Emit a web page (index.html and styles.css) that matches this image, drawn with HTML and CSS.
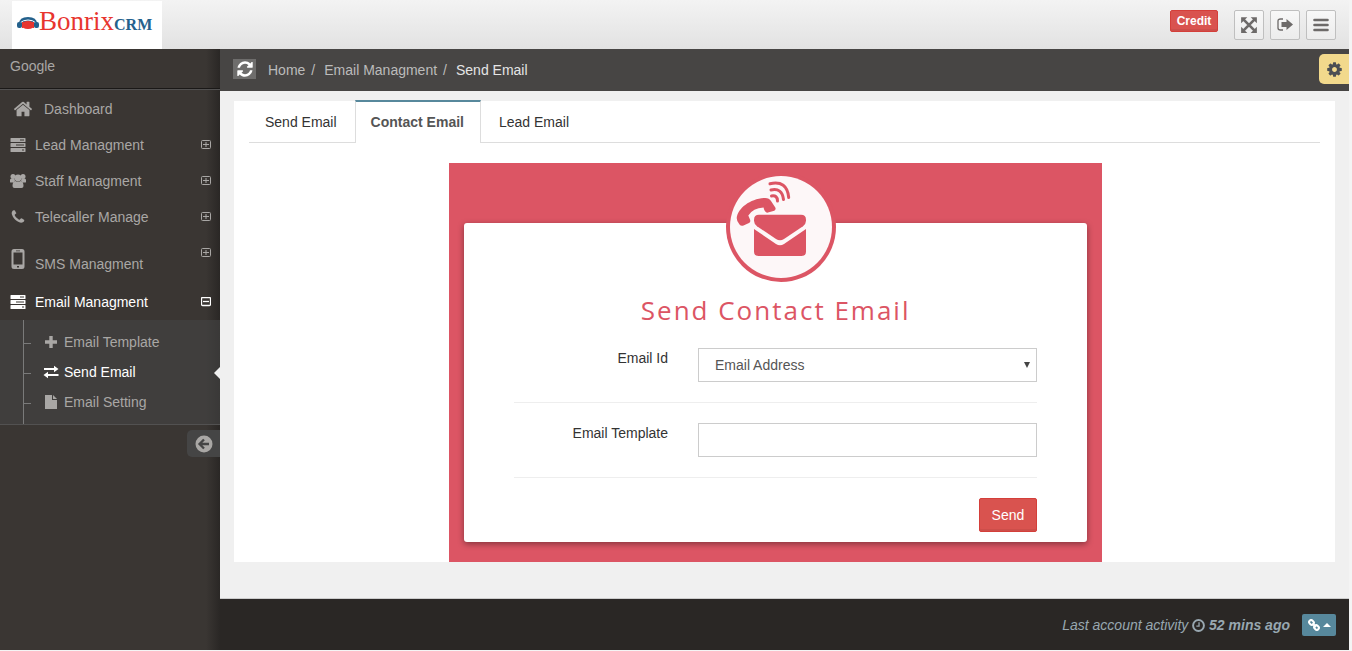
FILE: index.html
```html
<!DOCTYPE html>
<html lang="en">
<head>
    <meta charset="UTF-8">
    <meta name="viewport" content="width=device-width, initial-scale=1.0">
    <title>Bonrix CRM - Send Email</title>
    <link rel="stylesheet" href="styles.css">
</head>
<body>
    <header id="header">
        <a href="#" class="logo">
            <svg width="22" height="14" viewBox="0 0 22 14">
                <path d="M2 8Q2 1 11 1t9 7" fill="#24618c"/>
                <path d="M3 7Q6 4 11 4t8 3" fill="none" stroke="#fff"/>
                <ellipse cx="11" cy="9" rx="7" ry="4" fill="#e8352e"/>
                <rect x="0" y="6" width="5" height="6" rx="2" fill="#24618c"/>
                <rect x="17" y="6" width="5" height="6" rx="2" fill="#24618c"/>
                <path d="M5.500 6v6M16.500 6v6" stroke="#e8352e"/>
            </svg>
            <span class="logo-name">Bonrix</span><span class="logo-crm">CRM</span>
        </a>
        <div class="header-buttons">
            <button type="button" class="btn-danger credit">Credit</button>
            <button type="button" class="header-icon" aria-label="Full screen">
                <svg width="18" height="18" viewBox="0 0 16 16"><path d="M1 1h5.500L1 6.500zM15 1v5.500L9.500 1zM1 15V9.500L6.500 15zM15 15H9.500L15 9.500z" fill="#6d6a69"/><path d="M3 3l10 10M13 3L3 13" stroke="#6d6a69" stroke-width="2.400"/></svg>
            </button>
            <button type="button" class="header-icon" aria-label="Sign out">
                <svg width="16" height="16" viewBox="0 0 16 16"><path d="M6 2H3.500q-2.500 0-2.500 2v7q0 2 2.500 2H6" fill="none" stroke="#6d6a69" stroke-width="1.300"/><path d="M4.500 5h5V2l6.500 5.500L9.500 13v-3h-5z" fill="#6d6a69"/></svg>
            </button>
            <button type="button" class="header-icon" aria-label="Menu">
                <svg width="16" height="16" viewBox="0 0 16 16"><path d="M1.500 3h13M1.500 8h13M1.500 13h13" stroke="#6d6a69" stroke-width="2.600" stroke-linecap="round"/></svg>
            </button>
        </div>
    </header>

    <div class="page">
        <aside id="left-panel">
            <div class="login-info">Google</div>
            <nav>
                <a href="#" class="nav-item dashboard">
                    <svg class="icon" width="20" height="20" viewBox="0 0 1792 1792"><path d="M1472 992v480q0 26-19 45t-45 19h-384v-384h-256v384h-384q-26 0-45-19t-19-45v-480q0-1 .5-3t.5-3l575-474 575 474q1 2 1 6zm223-69l-62 74q-8 9-21 11h-3q-13 0-21-7l-692-577-692 577q-12 8-24 7-13-2-21-11l-62-74q-8-10-7-23.500t11-21.500l719-599q32-26 76-26t76 26l244 204v-195q0-14 9-23t23-9h192q14 0 23 9t9 23v408l219 182q10 8 11 21.500t-7 23.500z"/></svg>
                    <span>Dashboard</span>
                </a>
                <a href="#" class="nav-item">
                    <svg class="icon" width="16" height="16" viewBox="0 0 16 16"><use href="#server"/></svg>
                    <span>Lead Managment</span>
                    <svg class="toggle" width="10" height="10" viewBox="0 0 10 10"><use href="#expand"/></svg>
                </a>
                <a href="#" class="nav-item">
                    <svg class="icon" width="16" height="16" viewBox="0 0 16 16"><circle cx="3" cy="3.500" r="2.500"/><circle cx="13" cy="3.500" r="2.500"/><path d="M0 9V7q0-1.500 1.500-1.500h3L5 8 3.500 9.500H1q-1 0-1-.5zM16 9V7q0-1.500-1.500-1.500h-3L11 8l1.500 1.500H15q1 0 1-.5z"/><circle cx="8" cy="5" r="3.400"/><path d="M2.500 13q0-4.800 3-5 2.500 1.700 5 0 3 .2 3 5 0 2-2 2h-7q-2 0-2-2z"/></svg>
                    <span>Staff Managment</span>
                    <svg class="toggle" width="10" height="10" viewBox="0 0 10 10"><use href="#expand"/></svg>
                </a>
                <a href="#" class="nav-item">
                    <svg class="icon" width="16" height="16" viewBox="0 0 1792 1792"><path d="M1600 1240q0 27-10 70.500t-21 68.500q-21 50-122 106-94 51-186 51-27 0-52.500-3.500t-57.500-12.500-47.500-14.500-55.500-20.500-49-18q-98-35-175-83-128-79-264.500-215.500t-215.500-264.500q-48-77-83-175-3-9-18-49t-20.500-55.500-14.500-47.500-12.500-57.500-3.500-52.500q0-92 51-186 56-101 106-122 25-11 68.500-21t70.500-10q14 0 21 3 18 6 53 76 11 19 30 54t35 63.500 31 53.500q3 4 17.500 25t21.500 35.500 7 28.500q0 20-28.500 50t-62 55-62 53-28.500 46q0 9 5 22.500t8.500 20.500 14 24 11.500 19q76 137 174 235t235 174q2 1 19 11.500t24 14 20.500 8.500 22.500 5q18 0 46-28.500t53-62 55-62 50-28.500q14 0 28.500 7t35.500 21.500 25 17.500q25 15 53.500 31t63.500 35 54 30q70 35 76 53 3 7 3 21z"/></svg>
                    <span>Telecaller Manage</span>
                    <svg class="toggle" width="10" height="10" viewBox="0 0 10 10"><use href="#expand"/></svg>
                </a>
                <a href="#" class="nav-item sms">
                    <svg class="icon" width="16" height="22" viewBox="0 0 16 22"><path fill-rule="evenodd" d="M4 1h8q2.500 0 2.500 2.500v15Q14.500 21 12 21H4q-2.500 0-2.500-2.500v-15Q1.500 1 4 1zM3.500 4.500v12h9v-12zM6 2.400v.8h4v-.8zM7 18v1.500h2V18z"/></svg>
                    <span>SMS Managment</span>
                    <svg class="toggle" width="10" height="10" viewBox="0 0 10 10"><use href="#expand"/></svg>
                </a>
                <a href="#" class="nav-item active">
                    <svg class="icon" width="16" height="16" viewBox="0 0 16 16"><use href="#server"/></svg>
                    <span>Email Managment</span>
                    <svg class="toggle" width="10" height="10" viewBox="0 0 10 10"><use href="#collapse"/></svg>
                </a>
                <div class="submenu">
                    <a href="#">
                        <svg class="icon" width="16" height="16" viewBox="0 0 16 16"><path d="M6.300 2h3.400v4.300H14v3.400H9.700V14H6.300V9.700H2V6.300h4.300z"/></svg>
                        Email Template
                    </a>
                    <a href="#" class="active">
                        <svg class="icon" width="16" height="16" viewBox="0 0 16 16"><path d="M1 4h10V1.800L15.500 5 11 8.200V6H1zM15.500 10H5V7.800L.5 11 5 14.200V12h10.500z"/></svg>
                        Send Email
                    </a>
                    <a href="#">
                        <svg class="icon" width="16" height="16" viewBox="0 0 16 16"><path d="M2 1h7v5h5v9H2zM10 1l4 4h-4z"/></svg>
                        Email Setting
                    </a>
                </div>
            </nav>
            <button type="button" class="minify" aria-label="Collapse menu">
                <svg width="18" height="18" viewBox="0 0 18 18"><circle cx="9" cy="9" r="8.500" fill="#a9a7a5"/><path d="M14 9H5M9 4.500L4.500 9 9 13.500" fill="none" stroke="#454545" stroke-width="2.300"/></svg>
            </button>
        </aside>

        <div id="main">
            <div class="ribbon">
                <button type="button" class="refresh" aria-label="Refresh">
                    <svg width="18" height="18" viewBox="0 0 1792 1792"><path fill="#fff" d="M1639 1056q0 5-1 7-64 268-268 434.500t-478 166.500q-146 0-282.500-55t-243.500-157l-129 129q-19 19-45 19t-45-19-19-45v-448q0-26 19-45t45-19h448q26 0 45 19t19 45-19 45l-137 137q71 66 161 102t187 36q134 0 250-65t186-179q11-17 53-117 8-23 30-23h192q13 0 22.500 9.500t9.500 22.500zm25-800v448q0 26-19 45t-45 19h-448q-26 0-45-19t-19-45 19-45l138-138q-148-137-349-137-134 0-250 65t-186 179q-11 17-53 117-8 23-30 23h-199q-13 0-22.500-9.500t-9.500-22.500v-7q65-268 270-434.500t480-166.500q146 0 284 55.500t245 156.500l130-129q19-19 45-19t45 19 19 45z"/></svg>
                </button>
                <ol class="breadcrumb">
                    <li><a href="#">Home</a></li>
                    <li><a href="#">Email Managment</a></li>
                    <li>Send Email</li>
                </ol>
                <button type="button" class="settings" aria-label="Settings">
                    <svg width="17" height="17" viewBox="0 0 1792 1792"><path fill="#4c4f53" d="M1152 896q0-106-75-181t-181-75-181 75-75 181 75 181 181 75 181-75 75-181zm512-109v222q0 12-8 23t-20 13l-185 28q-19 54-39 91 35 50 107 138 10 12 10 25t-9 23q-27 37-99 108t-94 71q-12 0-26-9l-138-108q-44 23-91 38-16 136-29 186-7 28-36 28h-222q-14 0-24.500-8.500t-11.500-21.500l-28-184q-49-16-90-37l-141 107q-10 9-25 9-14 0-25-11-126-114-165-168-7-10-7-23 0-12 8-23 15-21 51-66.500t54-70.500q-27-50-41-99l-183-27q-13-2-21-12.500t-8-23.500v-222q0-12 8-23t19-13l186-28q14-46 39-92-40-57-107-138-10-12-10-24 0-10 9-23 26-36 98.500-107.500t94.500-71.500q13 0 26 10l138 107q44-23 91-38 16-136 29-186 7-28 36-28h222q14 0 24.500 8.500t11.500 21.500l28 184q49 16 90 37l142-107q9-9 24-9 13 0 25 10 129 119 165 170 7 8 7 22 0 12-8 23-15 21-51 66.500t-54 70.500q26 50 41 98l183 28q13 2 21 12.500t8 23.500z"/></svg>
                </button>
            </div>

            <main class="content">
                <div class="widget">
                    <div class="tabs">
                        <a href="#">Send Email</a>
                        <a href="#" class="active">Contact Email</a>
                        <a href="#">Lead Email</a>
                    </div>
                    <div class="mail-box">
                        <svg class="mail-logo" width="110" height="110" viewBox="0 0 110 110">
                            <circle cx="55" cy="55" r="55" fill="#dc5564"/>
                            <circle cx="55" cy="55" r="51" fill="#fdf7f8"/>
                            <path fill="#dc5564" d="M33 42.700h42q5 0 5 5v1q0 3-3 5.500L58 67q-4 2.500-8 0L31 54.200q-3-2.500-3-5.500v-1q0-5 5-5z"/>
                            <path fill="#dc5564" d="M28 57l22 15q4 2.500 8 0l22-15v22.500q0 4.500-4.500 4.500h-43q-4.500 0-4.500-4.500z"/>
                            <path fill="#dc5564" d="M10.700 46C12 36 24 27 38 26q5-.5 7 3l4.300 6.500q1 2-1 3.200L42 40.500q-3 1-4.500-5Q27 36 22.300 43.500l1.700 4q1 2.500-1 3.500l-5.500 2.500q-2.500 1-4-1-2.800-3-2.800-6.500z"/>
                            <g fill="none" stroke="#dc5564" stroke-width="3" stroke-linecap="round"><path d="M45.500 24q6-1 6 5M45 18q11-2.500 12.500 9.500M44 11.800Q61 8 62.700 25.500"/></g>
                        </svg>
                        <form class="mail-form">
                            <h1>Send Contact Email</h1>
                            <div class="form-row">
                                <label for="emailId">Email Id</label>
                                <select id="emailId" name="emailId">
                                    <option>Email Address</option>
                                </select>
                            </div>
                            <div class="form-row">
                                <label for="emailTemplate">Email Template</label>
                                <input type="text" id="emailTemplate" name="emailTemplate">
                            </div>
                            <div class="form-actions">
                                <button type="button" class="btn-danger send">Send</button>
                            </div>
                        </form>
                    </div>
                </div>
            </main>

            <footer>
                <i class="activity">Last account activity
                    <svg width="13" height="13" viewBox="0 0 12 12"><g fill="none" stroke="#98a7b0"><circle cx="6" cy="6" r="5" stroke-width="1.800"/><path d="M6.500 3v3.500H4" stroke-width="1.200"/></g></svg>
                    <strong>52 mins ago</strong></i>
                <button type="button" class="links" aria-label="Links">
                    <svg width="12" height="12" viewBox="0 0 12 12"><g fill="none" stroke="#fff" stroke-width="2"><rect x="1" y="1.500" width="5" height="4" rx="2" transform="rotate(45 3.500 3.500)"/><rect x="6" y="6.500" width="5" height="4" rx="2" transform="rotate(45 8.500 8.500)"/><path d="M4.500 4.500l3.500 3.500"/></g></svg>
                    <svg width="8" height="4" viewBox="0 0 8 4"><path d="M0 4l4-4 4 4z" fill="#fff"/></svg>
                </button>
            </footer>
        </div>
    </div>

    <!-- shared menu icons -->
    <svg class="icon-defs" width="0" height="0">
        <symbol id="server" viewBox="0 0 16 16"><path fill-rule="evenodd" d="M1 1h14q.5 0 .5.500v3q0 .5-.5.500H1q-.5 0-.5-.5v-3Q.5 1 1 1zM1 6h14q.5 0 .5.500v3q0 .5-.5.500H1q-.5 0-.5-.5v-3Q.5 6 1 6zM1 11h14q.5 0 .5.500v3q0 .5-.5.500H1q-.5 0-.5-.5v-3q0-.5.500-.5zM10 2.500v1h4v-1zM6 7.500v1h8v-1zM12 12.500v1h2v-1z"/></symbol>
        <symbol id="expand" viewBox="0 0 10 10"><rect x=".5" y=".5" width="9" height="8" rx="1" fill="none" stroke="currentColor"/><path d="M2 4.500h6M5 2v5" stroke="currentColor"/></symbol>
        <symbol id="collapse" viewBox="0 0 10 10"><rect x=".5" y=".5" width="9" height="8" rx="1" fill="none" stroke="currentColor" stroke-width="1.300"/><path d="M2 4.500h6" stroke="currentColor" stroke-width="1.300"/></symbol>
    </svg>
</body>
</html>
```

FILE: styles.css
```css
* {
    box-sizing: border-box;
}

body {
    font-family: "Liberation Sans", Arial, sans-serif;
    font-size: 14px;
    line-height: 20px;
    color: #333;
    background-color: #f4f4f4;
    margin: 0;
    padding: 0 3px 1px 0;
    min-height: 100vh;
    display: flex;
    flex-direction: column;
}

a {
    color: inherit;
    text-decoration: none;
}

button {
    font-family: inherit;
    cursor: pointer;
    padding: 0;
    border: none;
    display: flex;
    align-items: center;
    justify-content: center;
}

.icon-defs {
    position: absolute;
}

/* header */
#header {
    height: 49px;
    display: flex;
    justify-content: space-between;
    align-items: flex-start;
    padding: 1px 13px 0 12px;
    background-image: linear-gradient(to bottom, #f3f3f3, #e2e2e2);
}

.logo {
    width: 150px;
    height: 48px;
    padding: 7px 0 0 5px;
    background-color: #fff;
    display: flex;
    align-items: baseline;
    font-family: "Liberation Serif", serif;
    line-height: 26px;
}

.logo-name {
    font-size: 27px;
    color: #e8352e;
}

.logo-crm {
    font-size: 16px;
    font-weight: bold;
    color: #24618c;
}

.header-buttons {
    display: flex;
    gap: 6px;
    padding-top: 9px;
}

.btn-danger {
    background-color: #d9534f;
    color: #fff;
    border: 1px solid #d43f3a;
    border-radius: 2px;
    box-shadow: inset 0 -2px 0 rgba(0, 0, 0, 0.05);
}

.credit {
    width: 48px;
    height: 22px;
    margin-right: 10px;
    font-size: 12px;
    font-weight: bold;
}

.header-icon {
    width: 30px;
    height: 30px;
    border: 1px solid #bfbfbf;
    border-radius: 2px;
    background-image: linear-gradient(to bottom, #f8f8f8, #ececec);
}

.page {
    flex: 1;
    display: grid;
    grid-template-columns: 220px 1fr;
}

/* left menu */
#left-panel {
    background-color: #3a3633;
    background-image: linear-gradient(to left, #2a2725, rgba(42, 39, 37, 0) 14px);
    color: #a9a7a5;
    display: flex;
    flex-direction: column;
}

.login-info {
    height: 41px;
    padding: 7px 10px;
    border-bottom: 1px solid #525151;
    box-shadow: inset 0 -1px 0 #1a1817;
}

.nav-item {
    display: flex;
    align-items: center;
    height: 36px;
    padding: 0 9px 0 10px;
    gap: 9px;
}

.icon {
    fill: currentColor;
}

.dashboard {
    height: 37px;
    padding-left: 13px;
    gap: 11px;
}

.toggle {
    margin-left: auto;
}

.sms {
    height: 49px;
    align-items: flex-start;
    padding-top: 13px;
}

.sms span {
    padding-top: 6px;
}

.nav-item.active,
.submenu .active {
    color: #fff;
}

.submenu {
    position: relative;
    padding: 7px 0;
    background-color: rgba(69, 69, 69, 0.6);
    border-bottom: 1px solid #525151;
}

.submenu::before {
    content: "";
    position: absolute;
    left: 23px;
    top: 0;
    bottom: 0;
    border-left: 1px solid #7a7a7a;
}

.submenu a {
    position: relative;
    display: flex;
    align-items: center;
    gap: 5px;
    height: 30px;
    padding-left: 43px;
}

.submenu a::before {
    content: "";
    position: absolute;
    left: 23px;
    top: 16px;
    width: 8px;
    border-top: 1px solid #7a7a7a;
}

.submenu .active::after {
    content: "";
    position: absolute;
    right: 0;
    top: 10px;
    border: 6px solid transparent;
    border-right-color: #f0f0f0;
    border-left: none;
}

.minify {
    align-self: flex-end;
    width: 33px;
    height: 27px;
    margin-top: 5px;
    background-color: #454545;
    border-radius: 5px 0 0 5px;
}

/* breadcrumb bar */
#main {
    display: flex;
    flex-direction: column;
    min-width: 0;
}

.ribbon {
    height: 42px;
    padding-left: 13px;
    display: flex;
    align-items: center;
    background-color: #474544;
}

.refresh {
    width: 23px;
    height: 20px;
    margin-bottom: 2px;
    background-color: #6e6d6c;
}

.breadcrumb {
    flex: 1;
    list-style: none;
    display: flex;
    margin: 0;
    padding: 0 0 0 12px;
    color: #bbb;
}

.breadcrumb li + li::before {
    content: "/";
    padding: 0 9px 0 6px;
    color: #bbb;
}

.breadcrumb li:last-child {
    color: #e4e4e4;
}

.settings {
    width: 30px;
    height: 30px;
    margin-bottom: 2px;
    background-color: #f2d98c;
    border-radius: 5px 0 0 5px;
}

/* content */
.content {
    flex: 1;
    padding: 10px 14px 36px;
    background-color: #f0f0f0;
}

.widget {
    background-color: #fff;
    padding: 0 15px;
}

.tabs {
    display: flex;
    height: 42px;
    border-bottom: 1px solid #ddd;
}

.tabs a {
    padding: 11px 18px 0 16px;
}

.tabs .active {
    margin: -1px 0;
    padding: 10px 16px 0 15px;
    font-weight: bold;
    color: #555;
    background-color: #fff;
    border: 1px solid #ddd;
    border-top: 2px solid #57889c;
    border-bottom: none;
}

.tabs .active + a {
    padding-left: 18px;
}

.mail-box {
    width: 61%;
    min-width: 480px;
    margin: 20px 0 0 200px;
    padding: 9px 15px 20px;
    background-color: #dc5564;
}

.mail-logo {
    position: relative;
    display: block;
    margin: 0 auto -59px;
    left: 5px;
}

.mail-form {
    padding: 69px 50px 10px;
    background-color: #fff;
    border-radius: 3px;
    box-shadow: 0 2px 6px rgba(0, 0, 0, 0.4);
}

.mail-form h1 {
    margin: 0 0 20px;
    font-family: "Open Sans", sans-serif;
    font-size: 26px;
    line-height: 36px;
    font-weight: 400;
    letter-spacing: 2px;
    text-align: center;
    color: #dc5564;
}

.form-row {
    display: grid;
    grid-template-columns: 154px 1fr;
    column-gap: 30px;
    padding-bottom: 20px;
    margin-bottom: 20px;
    border-bottom: 1px solid #eee;
}

.form-row label {
    text-align: right;
}

.form-row input,
.form-row select {
    width: 100%;
    height: 34px;
    padding: 6px 16px;
    font-family: inherit;
    font-size: 14px;
    color: #555;
    background-color: #fff;
    border: 1px solid #ccc;
    border-radius: 0;
}

.form-row select {
    appearance: none;
    background-image: url("data:image/svg+xml,%3Csvg xmlns='http://www.w3.org/2000/svg' width='6' height='6'%3E%3Cpath d='M0 0h6L3 6z' fill='%23444'/%3E%3C/svg%3E");
    background-repeat: no-repeat;
    background-position: right 6px center;
}

.form-actions {
    display: flex;
    justify-content: flex-end;
}

.send {
    height: 34px;
    padding: 0 12px;
    font-size: 14px;
}

footer {
    height: 52px;
    display: flex;
    align-items: center;
    justify-content: flex-end;
    gap: 12px;
    padding-right: 13px;
    background-color: #2a2725;
    border-top: 1px solid #ccc;
    color: #98a7b0;
}

.activity svg {
    vertical-align: -2px;
}

.links {
    width: 34px;
    height: 22px;
    gap: 3px;
    background-color: #57889c;
    border-radius: 2px;
}
```
